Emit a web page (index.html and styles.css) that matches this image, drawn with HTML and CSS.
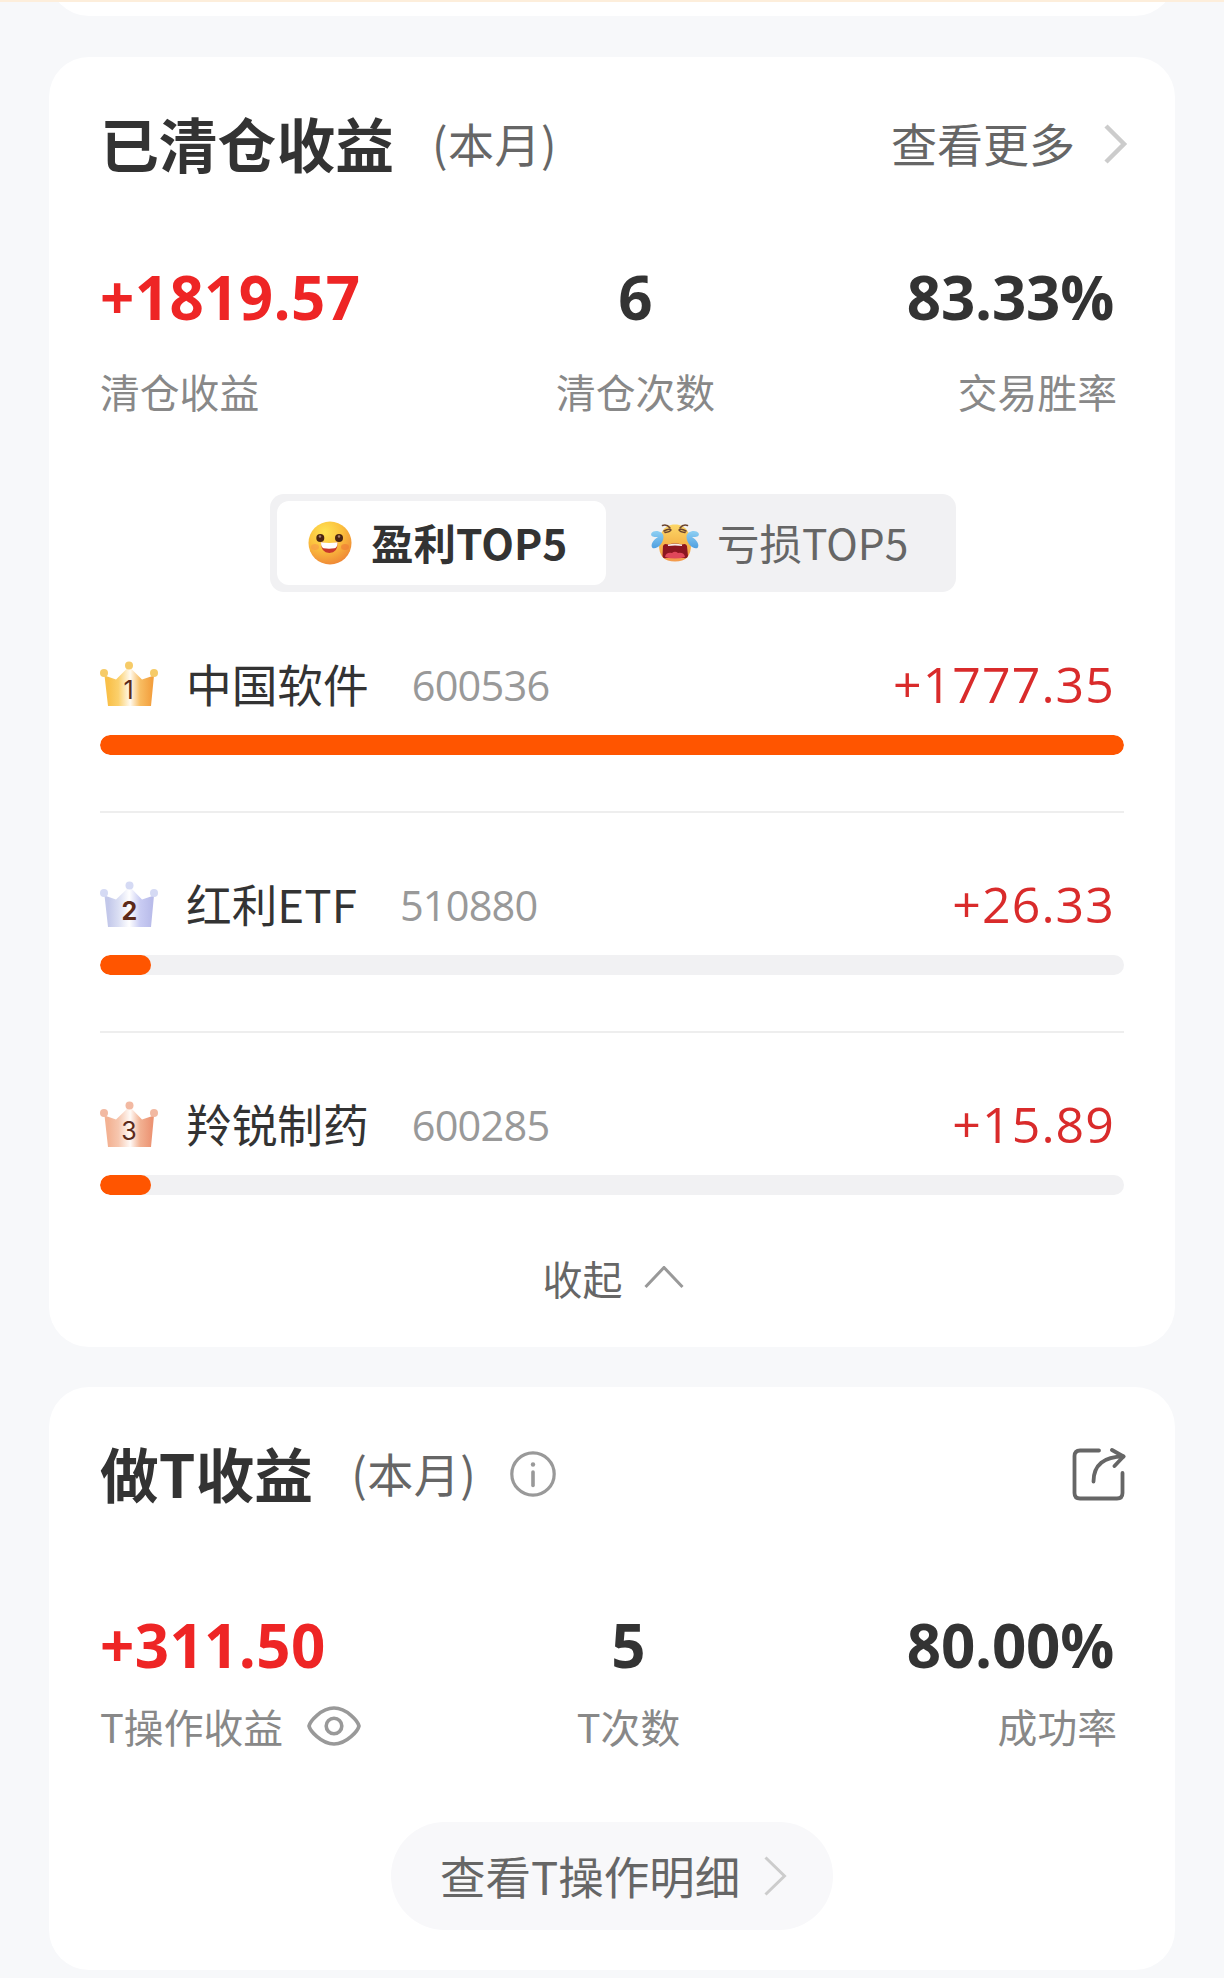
FILE: index.html
```html
<!DOCTYPE html>
<html lang="zh-CN">
<head>
<meta charset="utf-8">
<title>收益</title>
<link rel="stylesheet" href="styles.css">
</head>
<body>
<svg class="defs" width="0" height="0" aria-hidden="true">
  <defs>
    <linearGradient id="gold" x1="0" x2="1"><stop offset="0.08" stop-color="#f9c04a"/><stop offset="0.28" stop-color="#fbd06c"/><stop offset="0.52" stop-color="#fffaf0"/><stop offset="0.72" stop-color="#f8bd62"/><stop offset="0.95" stop-color="#f3a03f"/></linearGradient>
    <linearGradient id="silver" x1="0" x2="1"><stop offset="0.08" stop-color="#c3c8ea"/><stop offset="0.28" stop-color="#dadef3"/><stop offset="0.5" stop-color="#ffffff"/><stop offset="0.72" stop-color="#c9ccf3"/><stop offset="0.95" stop-color="#b9bcea"/></linearGradient>
    <linearGradient id="bronze" x1="0" x2="1"><stop offset="0.08" stop-color="#f3b293"/><stop offset="0.28" stop-color="#f6c6ae"/><stop offset="0.52" stop-color="#fffaf7"/><stop offset="0.72" stop-color="#f2b192"/><stop offset="0.95" stop-color="#ec9474"/></linearGradient>
    <radialGradient id="smile" cx="0.38" cy="0.25" r="0.8"><stop offset="0" stop-color="#ffe352"/><stop offset="0.5" stop-color="#fbc03d"/><stop offset="1" stop-color="#ee8436"/></radialGradient>
    <linearGradient id="cry" x1="0" y1="0" x2="0" y2="1"><stop offset="0" stop-color="#fcd768"/><stop offset="0.5" stop-color="#f6b74b"/><stop offset="1" stop-color="#f39a4c"/></linearGradient>
    <linearGradient id="tear" x1="0" y1="0" x2="0" y2="1"><stop offset="0" stop-color="#8fd0f3"/><stop offset="1" stop-color="#4f9fe0"/></linearGradient>
  </defs>
</svg>

<div class="prev"><div class="card card-prev"></div></div>

<section class="card card-closed">
  <header class="head">
    <h2 class="title">已清仓收益</h2>
    <span class="period">(本月)</span>
    <a class="more">查看更多
      <svg width="24" height="40" viewBox="0 0 24 40" fill="none" stroke="#ccc" stroke-width="4.500"><path d="M2 2 20 20 2 38"/></svg>
    </a>
  </header>

  <div class="stats">
    <div class="stat"><b class="num up">+1819.57</b><span class="label">清仓收益</span></div>
    <div class="stat mid"><b class="num">6</b><span class="label">清仓次数</span></div>
    <div class="stat end"><b class="num">83.33%</b><span class="label">交易胜率</span></div>
  </div>

  <div class="tabs">
    <div class="tab active">
      <svg class="face" width="44" height="44" viewBox="0 0 44 44">
        <circle cx="22" cy="22" r="21.500" fill="url(#smile)"/>
        <ellipse cx="7" cy="26" rx="4" ry="3" fill="#f79a4a" opacity=".6"/><ellipse cx="37" cy="26" rx="4" ry="3" fill="#ef7a35" opacity=".6"/>
        <circle cx="12.300" cy="17" r="4" fill="#4a2412"/><circle cx="31" cy="17" r="4" fill="#4a2412"/>
        <circle cx="12" cy="15.500" r="1.200" fill="#a58070"/><circle cx="31" cy="15.500" r="1.200" fill="#a58070"/>
        <path d="M13 21.500Q21 23 29.500 21.500Q30 32 21.300 32Q13 32 13 21.500Z" fill="#c9382b"/>
        <path d="M13 21.300Q21 22.500 29.500 21.300Q29.500 27 26.500 27.300Q21 28.200 15.500 27.300Q13 26.500 13 21.300Z" fill="#fff"/>
      </svg>
      <span>盈利TOP5</span>
    </div>
    <div class="tab">
      <svg class="face" width="50" height="40" viewBox="0 0 50 40">
        <path d="M25 1.500C37 1.500 41 12 41 22C41 33 36 38.500 25 38.500S9 33 9 22C9 12 13 1.500 25 1.500Z" fill="url(#cry)"/>
        <path d="M13 23Q14 20 18 21.500Q25 19.500 32 21.500Q36 20 37 23L38 33Q37 36 34 35H16Q13 36 12.500 33Z" fill="#8c1620"/>
        <path d="M18 21.500Q25 20 32 21.500V23Q25 22 18 23Z" fill="#f7ece9"/>
        <path d="M15 34Q16 29 22 30Q25 27.500 28 30Q34 29 35 34Q25 37 15 34Z" fill="#e0475a"/>
        <g fill="none" stroke="#6b4430" stroke-width="1.500" stroke-linecap="round"><path d="M12.500 2.500Q17 1 20 5"/><path d="M14 8Q19 5 21 7Q20 9 15 9.500"/><path d="M37.500 2.500Q33 1 30 5"/><path d="M36 8Q31 5 29 7Q30 9 35 9.500"/></g>
        <g fill="url(#tear)"><path d="M13.500 14C14 8 4 6 1.500 10C0 13 3 14.500 8 14C3 17 0 22 2.500 25C7 27 13.500 20 13.500 14Z"/><path d="M36.500 14C36 8 46 6 48.500 10C50 13 47 14.500 42 14C47 17 50 22 47.500 25C43 27 36.500 20 36.500 14Z"/></g>
      </svg>
      <span>亏损TOP5</span>
    </div>
  </div>

  <div class="list">
    <div class="item">
      <div class="row">
        <svg class="crown" width="58" height="46" viewBox="0 0 58 46"><path d="M4.500 14.500 16 18.500 29 5.500 42 18.500 54 14.500 51 45H8Z" fill="url(#gold)"/><g fill="#f6cb68"><circle cx="4" cy="12" r="4"/><circle cx="29" cy="4.500" r="4"/><circle cx="54" cy="12" r="4"/></g><text x="28.500" y="38" class="rank">1</text></svg>
        <span class="name">中国软件</span><span class="code">600536</span><span class="amount">+1777.35</span>
      </div>
      <div class="bar"><i style="width:100%"></i></div>
    </div>
    <div class="item">
      <div class="row">
        <svg class="crown" width="58" height="46" viewBox="0 0 58 46"><path d="M4.500 14.500 16 18.500 29.500 5.500 42 18.500 54 14.500 51 46H8Z" fill="url(#silver)"/><g fill="#d5daf4"><circle cx="4" cy="12" r="4"/><circle cx="29.500" cy="4.500" r="4"/><circle cx="54" cy="12" r="4"/></g><text x="29.300" y="38.500" class="rank heavy">2</text></svg>
        <span class="name">红利ETF</span><span class="code">510880</span><span class="amount">+26.33</span>
      </div>
      <div class="bar"><i style="width:5%"></i></div>
    </div>
    <div class="item">
      <div class="row">
        <svg class="crown" width="58" height="46" viewBox="0 0 58 46"><path d="M4.500 14.500 16 18.500 29.500 5.500 42 18.500 54 14.500 51 46H8Z" fill="url(#bronze)"/><g fill="#f2b9a2"><circle cx="4" cy="12" r="4"/><circle cx="29.500" cy="4.500" r="4"/><circle cx="54" cy="12" r="4"/></g><text x="29" y="38.500" class="rank">3</text></svg>
        <span class="name">羚锐制药</span><span class="code">600285</span><span class="amount">+15.89</span>
      </div>
      <div class="bar"><i style="width:5%"></i></div>
    </div>
  </div>

  <div class="fold">收起
    <svg width="40" height="24" viewBox="0 0 40 24" fill="none" stroke="#999" stroke-width="3"><path d="M1.500 21 20 1.500 38.500 21"/></svg>
  </div>
</section>

<section class="card card-t">
  <header class="head">
    <h2 class="title">做T收益</h2>
    <span class="period">(本月)</span>
    <svg class="info" width="46" height="46" viewBox="0 0 46 46" fill="none" stroke="#999" stroke-linecap="round"><circle cx="23" cy="23" r="21.200" stroke-width="3.200"/><path d="M23 21V34.500" stroke-width="3.600"/><circle cx="23" cy="13.500" r="2.200" fill="#999" stroke="none"/></svg>
    <svg class="share" width="54" height="54" viewBox="0 0 54 54" fill="none" stroke="#666" stroke-width="3.800" stroke-linecap="round" stroke-linejoin="round"><path d="M27 3.500H8Q2.500 3.500 2.500 9V46Q2.500 51.500 8 51.500H45Q50.500 51.500 50.500 46V26"/><path d="M21.500 34.500C21.500 18 32 9.500 51.500 9.500"/><path d="M40 3 51.500 9.500 42.500 19"/></svg>
  </header>

  <div class="stats">
    <div class="stat"><b class="num up">+311.50</b><span class="label">T操作收益
      <svg width="54" height="40" viewBox="0 0 54 40" fill="none" stroke="#999" stroke-width="3.600"><path d="M2 20C3 15.500 14 2 27 2S51 15.500 52 20C51 24.500 40 38 27 38S3 24.500 2 20Z" stroke-linejoin="round"/><circle cx="27" cy="20" r="7.800"/></svg></span></div>
    <div class="stat mid"><b class="num">5</b><span class="label">T次数</span></div>
    <div class="stat end"><b class="num">80.00%</b><span class="label">成功率</span></div>
  </div>

  <a class="detail"><span>查看T操作明细</span>
    <svg width="23" height="40" viewBox="0 0 23 40" fill="none" stroke="#ccc" stroke-width="3"><path d="M1.500 1.500 20.500 20 1.500 38.500"/></svg>
  </a>
</section>
</body>
</html>
```
FILE: styles.css
```css
* { box-sizing: border-box; }

body {
  margin: 0;
  height: 1978px;
  overflow: hidden;
  padding: 0 49px;
  background: #f7f8fa;
  border-top: 2px solid #fdeedb;
  font-family: "Noto Sans CJK SC", sans-serif;
  color: #333;
}

svg { display: block; flex: none; }
.defs { position: absolute; }

.card {
  background: #fff;
  border-radius: 40px;
  padding: 0 51px;
}
.prev { display: flex; align-items: flex-end; height: 14px; overflow: hidden; margin-bottom: 41px; }
.card-prev { flex: 1; height: 90px; }
.card-closed { height: 1290px; padding-top: 52px; margin-bottom: 40px; }
.card-t { height: 583px; padding-top: 52px; }

.head { display: flex; align-items: center; height: 70px; }
.title { margin: 0 0 2px; font-size: 58.800px; font-weight: 700; line-height: 70px; }
.period { margin: 0 0 5px 38px; font-size: 46px; line-height: 70px; letter-spacing: .5px; color: #666; }
.more { margin: 0 -4px 5px auto; display: flex; align-items: center; gap: 29px; font-size: 46px; line-height: 70px; color: #666; }
.more svg { margin-top: 4px; }
.info { margin-left: 34px; }
.share { margin-left: auto; margin-right: -2px; }

.stats { display: grid; grid-template-columns: 430px 211px 1fr; padding-right: 7px; }
.stat { display: flex; flex-direction: column; align-items: flex-start; }
.mid { align-items: center; }
.end { align-items: flex-end; }
.num {
  font: 700 60px/60px "Open Sans", sans-serif;
  letter-spacing: .4px;
}
.end .num { margin-right: 3px; letter-spacing: -.2px; }
.up { color: #ee2525; }
.label { display: flex; align-items: center; gap: 24px; font-size: 39.800px; line-height: 50px; color: #888; }
.card-closed .stats { margin-top: 88px; }
.card-closed .num { margin-bottom: 39px; }
.card-t .stats { margin-top: 106px; grid-template-columns: 423px 211px 1fr; }
.card-t .num { margin-bottom: 26px; }

.tabs {
  display: flex;
  width: 686px;
  height: 98px;
  margin: 78px 0 0 170px;
  padding: 7px;
  border-radius: 14px;
  background: #f1f1f3;
}
.tab { display: flex; align-items: center; font-size: 42.500px; color: #666; padding-left: 44px; gap: 17px; }
.tab span { margin-bottom: 3px; }
.tab.active { width: 329px; padding-left: 31px; gap: 19px; border-radius: 12px; background: #fff; color: #333; font-weight: 700; }

.list { margin-top: 39px; }
.item { height: 220px; padding-top: 38px; }
.item + .item { border-top: 2px solid #eee; }
.item:first-child { height: 180px; padding-top: 0; }
.row { display: flex; align-items: center; height: 104px; padding-right: 9px; }
.crown { margin-top: 2px; }
.name { margin: 0 0 1px 28px; font-size: 45.700px; }
.code { margin: 3px 0 0 43px; font: 400 41.500px "Open Sans", sans-serif; letter-spacing: -.8px; color: #999; }
.amount { margin: 2px 0 0 auto; font: 400 50px "Open Sans", sans-serif; letter-spacing: 1.100px; color: #d92b2b; }
.rank { font: 400 25px Inter, sans-serif; fill: #5c2a1a; text-anchor: middle; }
.heavy { font-weight: 700; }
.bar { height: 20px; border-radius: 10px; background: #f1f1f3; overflow: hidden; }
.bar i { display: block; height: 100%; border-radius: 10px; background: #ff5500; }

.fold { display: flex; justify-content: center; align-items: center; gap: 21px; height: 50px; margin-top: 2px; padding-left: 2px; font-size: 40px; color: #666; }

.detail {
  display: flex;
  align-items: center;
  width: 442px;
  height: 108px;
  margin: 71px 0 0 291px;
  padding-left: 49px;
  gap: 24px;
  border-radius: 54px;
  background: #f8f8fa;
  font-size: 45.500px;
  color: #666;
}
.detail span { margin-bottom: 3px; }
```
